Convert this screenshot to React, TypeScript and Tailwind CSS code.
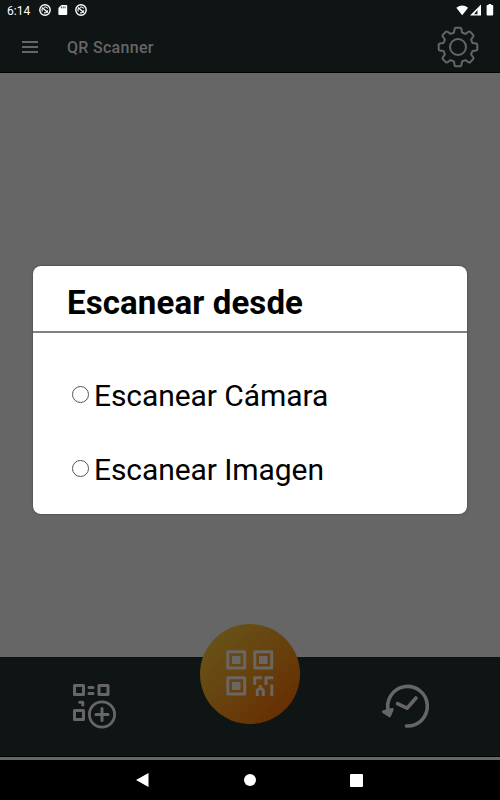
const GEAR_TEETH = [0, 45, 90, 135, 180, 225, 270, 315];

// Closed outline of an eight-toothed cog centred on the origin.
const gearPath =
  GEAR_TEETH.map((deg, i) => {
    const a = (deg * Math.PI) / 180;
    // The tooth points along +x, so y runs across its width.
    const p = (across: number, out: number) =>
      `${(out * Math.cos(a) - across * Math.sin(a)).toFixed(2)} ${(out * Math.sin(a) + across * Math.cos(a)).toFixed(2)}`;
    return `${i === 0 ? "M" : "L"}${p(-4, 14.6)} L${p(-3.4, 18.2)} Q${p(-3.2, 19.3)} ${p(-2.2, 19.3)} L${p(2.2, 19.3)} Q${p(3.2, 19.3)} ${p(3.4, 18.2)} L${p(4, 14.6)} Q${p(5.4, 13.9)} ${p(6.6, 13.3)}`;
  }).join(" ") + "Z";

function Gear() {
  return (
    <svg width="42" height="42" viewBox="-21 -21 42 42" fill="none" stroke="#666" strokeWidth="2" strokeLinejoin="round">
      <path d={gearPath} />
      <circle r="8" />
    </svg>
  );
}

function SyncBadge() {
  return (
    <svg width="12" height="12" viewBox="0 0 12 12" fill="none" stroke="#fff">
      <circle cx="6" cy="6" r="5.2" strokeWidth="1.4" />
      <path d="M3.3 7.4A3 3 0 0 1 3.6 4.2M5 3.3A3 3 0 0 1 8.7 4.6M8.8 6.4A3 3 0 0 1 5 8.7" strokeWidth="1.1" />
      <path d="M3.2 3.6 8.8 8.6" strokeWidth="1.3" />
    </svg>
  );
}

function StatusBar() {
  return (
    <div className="flex h-5 items-center pl-[7px] pr-[6px] text-white">
      <span className="w-8 pt-px text-[12px] leading-5">6:14</span>
      <SyncBadge />
      <svg className="ml-[7px]" width="10" height="12" viewBox="0 0 10 12">
        <path d="M3.4 1H8.4Q9.2 1 9.2 1.8V10.2Q9.2 11 8.4 11H1.2Q.4 11 .4 10.2V4Z" fill="#fff" />
        <path d="M3.4 2.5V4.3M5.2 2.5V4.3M7 2.5V4.3" stroke="#111616" strokeWidth=".8" />
      </svg>
      <span className="ml-[7px] flex"><SyncBadge /></span>
      <svg className="ml-auto" width="38" height="14" viewBox="0 0 38 14" fill="#fff">
        <path d="M.3 4.7Q6.2.2 12.1 4.7L6.2 12.2Z" />
        <path fillRule="evenodd" d="M25 1.5V12.5H14ZM21.5 6.9 18 11.2H21.5Z" />
        <path d="M31.4 2H32.6V1H35.2V2H36.4Q37.2 2 37.2 2.8V11.6Q37.2 12.6 36.2 12.6H31.6Q30.6 12.6 30.6 11.6V2.8Q30.6 2 31.4 2Z" />
      </svg>
    </div>
  );
}

function CreateIcon() {
  return (
    <svg width="46" height="46" viewBox="0 0 46 46" fill="none" stroke="#666" strokeWidth="3">
      <path d="M2.5 2.5H11.5V11.5H2.5ZM27 2.5H36V11.5H27ZM2.5 27.5H11.5V36.5H2.5Z" strokeLinejoin="round" />
      <path d="M17 4.6H21M17 10.6H21" strokeLinecap="round" />
      <path d="M7.7 19.2H10.8V22" strokeLinecap="round" strokeLinejoin="round" />
      <circle cx="30" cy="31.5" r="12.6" strokeWidth="2.8" />
      <path d="M30 25.5V37.5M24 31.5H36" strokeLinecap="round" />
    </svg>
  );
}

function HistoryIcon() {
  return (
    <svg width="50" height="46" viewBox="0 0 50 46" fill="none" stroke="#666" strokeWidth="3.6" strokeLinecap="round" strokeLinejoin="round">
      <path d="M8.6 29A19.8 19.8 0 1 1 26.5 43" />
      <path d="M17.5 20.7 27 25.2 36 15" />
      <path d="M3.5 28.8 9.6 32.8 12.2 26.5Z" fill="#666" strokeWidth="3" />
    </svg>
  );
}

function QrIcon() {
  return (
    <svg width="50" height="50" viewBox="0 0 50 50" fill="none" stroke="#696663" strokeWidth="3">
      <path d="M2.8 2.8H19.7V18.9H2.8ZM29.8 2.8H46.7V18.9H29.8ZM2.8 28.8H19.7V45.1H2.8Z" strokeLinejoin="round" />
      <path d="M7 7H15.5V15H7ZM34 7H42.5V15H34ZM7 33H15.5V41H7Z" fill="#696663" stroke="none" />
      <path d="M29.7 36V28.8H37M41 36V28.8H48.3M32.3 47V41.2L35.3 38.8 38.3 41.2V47M35.3 39.5V36M46.8 35.5V47" />
    </svg>
  );
}

function Option({ label }: { label: string }) {
  return (
    <label className="flex h-[74px] items-center text-[30px] leading-[36px] tracking-[-0.08px]">
      <input type="radio" name="source" className="mr-[5px] mb-[3px] size-[17px] appearance-none rounded-full border border-[#555] bg-white" />
      <span>{label}</span>
    </label>
  );
}

export default function App() {
  return (
    <div className="relative flex h-[800px] w-[500px] flex-col overflow-hidden bg-[#666] font-['Roboto',sans-serif]">
      <header className="h-[73px] border-b border-black bg-[#0f1415]">
        <StatusBar />
        <div className="flex h-[53px] items-center pl-[22px] pr-[21px]">
          <div className="flex w-4 flex-col gap-[3px]">
            <span className="h-[2px] bg-[#666]" />
            <span className="h-[2px] bg-[#666]" />
            <span className="h-[2px] bg-[#666]" />
          </div>
          <h1 className="ml-[29px] grow pt-[2px] text-[16px] font-medium tracking-[0.3px] text-[#666]">QR Scanner</h1>
          <Gear />
        </div>
      </header>

      <main className="flex h-[584px] flex-col items-center pt-[193px]">
        <section className="h-[248px] w-[434px] rounded-lg bg-white text-black shadow-[0_0_2px_rgba(0,0,0,0.5)]">
          <h2 className="h-[67px] border-b-2 border-[#808080] pl-[34px] pt-[17px] text-[33px] font-bold leading-[40px] tracking-[0.12px]">Escanear desde</h2>
          <div className="pl-[39px] pt-[26px]">
            <Option label="Escanear Cámara" />
            <Option label="Escanear Imagen" />
          </div>
        </section>
      </main>

      <nav className="relative flex h-[100px] items-center justify-between border-b border-black bg-[#0f1415] pb-[2px] pl-[72px] pr-[70px]">
        <CreateIcon />
        <HistoryIcon />
        <button className="absolute left-[200px] top-[-33px] flex size-[100px] items-center justify-center rounded-full bg-linear-to-br from-[#66581b] to-[#662800]">
          <QrIcon />
        </button>
      </nav>

      <footer className="mt-[3px] flex h-10 items-center justify-between bg-black pl-[136px] pr-[137px]">
        <svg width="13" height="14" viewBox="0 0 13 14" fill="#fff"><path d="M0 7 12.5 0V14Z" /></svg>
        <span className="size-3 rounded-full bg-white" />
        <span className="size-[13px] rounded-[1px] bg-white" />
      </footer>
    </div>
  );
}
